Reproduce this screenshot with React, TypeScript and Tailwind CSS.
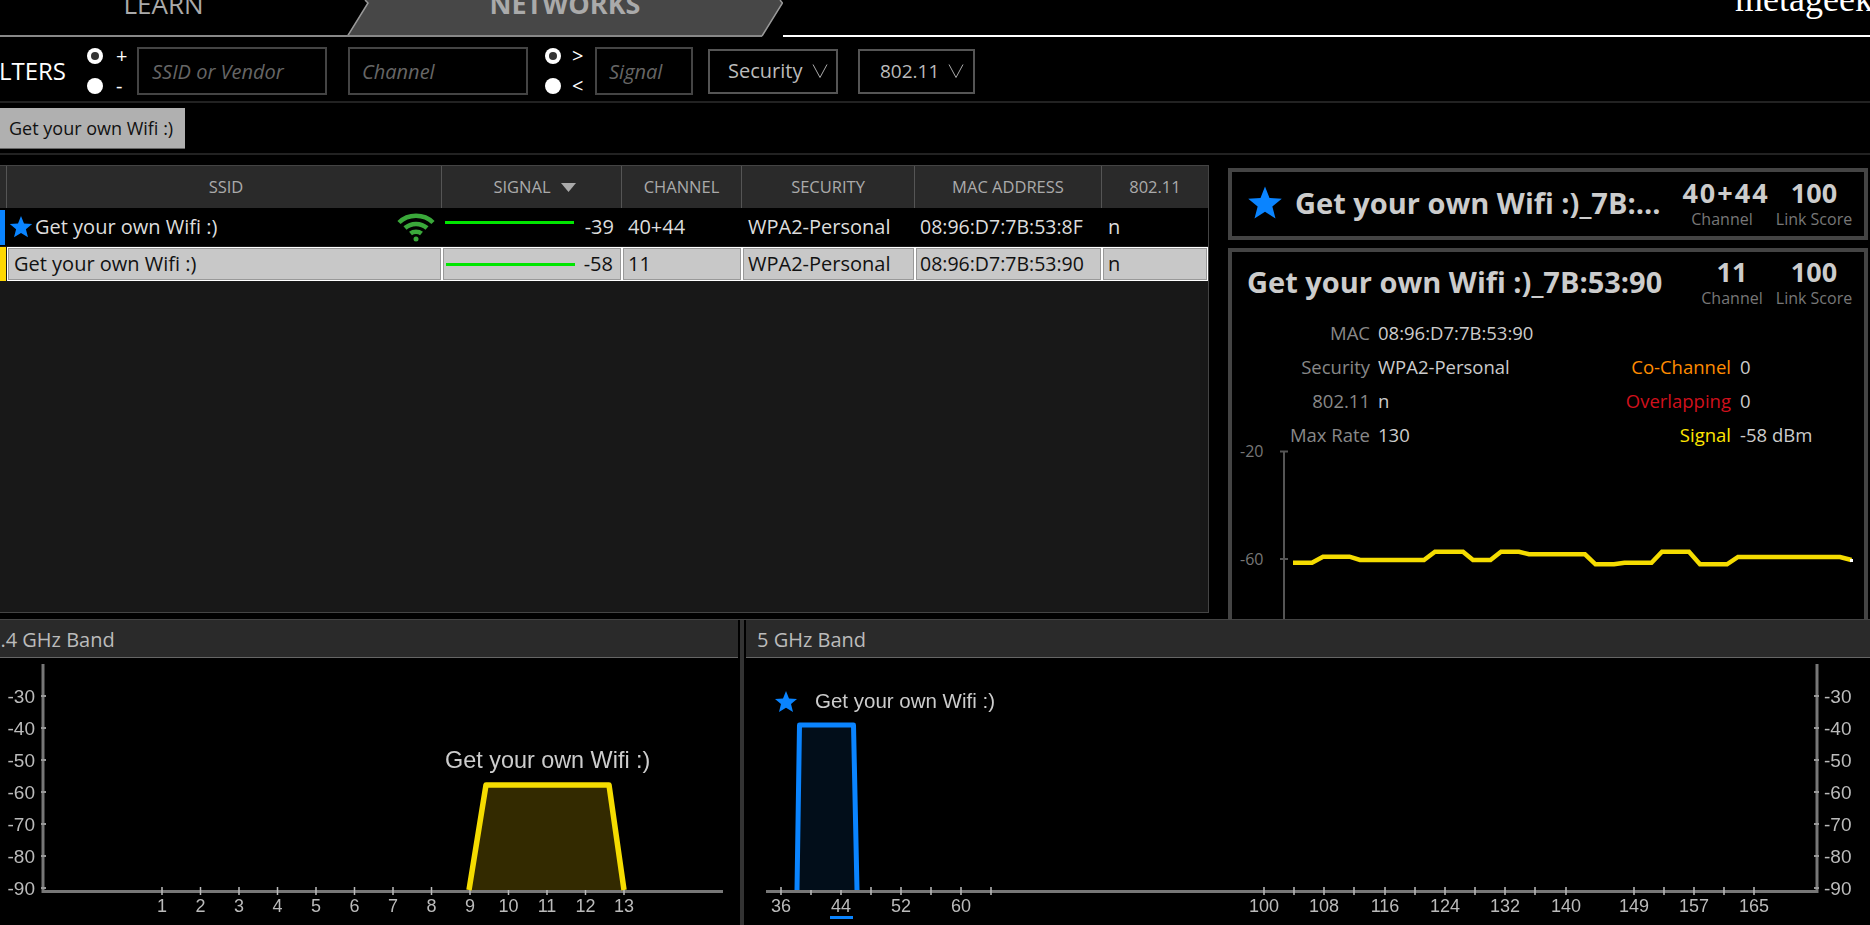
import React from 'react';

const FONT = "font-['Open_Sans','Noto_Sans',sans-serif]";

const Star = ({ size, className }: { size: number; className?: string }) => (
  <svg width={size} height={size} viewBox="0 0 24 24" className={className}>
    <path d="M12 1l3 7.6 8.2.5-6.3 5.2 2.1 8L12 17.9l-7 4.4 2.1-8L.8 9.1 9 8.6z" fill="#0a84ff" />
  </svg>
);

const WifiIcon = () => (
  <svg width="38" height="30" viewBox="0 0 38 30" className="shrink-0" fill="none" stroke="#3aa83a" strokeWidth="4.500">
    <path d="M2 10.5C11 1.5 27 1.5 36 10.5" />
    <path d="M8 16c6-5.500 16-5.500 22 0" />
    <path d="M13.500 21.500c3-2.500 8-2.500 11 0" />
    <circle cx="19" cy="27" r="2.500" fill="#3aa83a" stroke="none" />
  </svg>
);

const Radio = ({ checked }: { checked?: boolean }) => (
  <div className="w-4 h-4 rounded-full bg-white flex items-center justify-center">
    {checked && <div className="w-2 h-2 rounded-full bg-[#333]" />}
  </div>
);

const Chevron = () => (
  <svg width="16" height="16" viewBox="0 0 16 16" fill="none" stroke="#aaa" strokeWidth="1">
    <path d="M1 1.500L8 14.500L15 1.500" />
  </svg>
);

const HEAD_CELL = 'flex items-center justify-center border-r border-[#555] text-[16.500px] text-[#aaa]';
const COLS = 'grid grid-cols-[7px_435px_180px_120px_173px_187px_106px]';

const TableHeader = () => (
  <div className={`${COLS} h-[43px] bg-[#2a2a2a] border-t border-[#444]`}>
    <div className={HEAD_CELL} />
    <div className={`${HEAD_CELL} pl-[4px]`}>SSID</div>
    <div className={`${HEAD_CELL} gap-[10px] pl-[6px]`}>
      SIGNAL
      <svg width="15" height="9" viewBox="0 0 15 9"><path d="M0 0h15L7.500 9z" fill="#aaa" /></svg>
    </div>
    <div className={HEAD_CELL}>CHANNEL</div>
    <div className={HEAD_CELL}>SECURITY</div>
    <div className={HEAD_CELL}>MAC ADDRESS</div>
    <div className="flex items-center justify-center text-[16.500px] text-[#aaa]">802.11</div>
  </div>
);

const NetworkRow = () => (
  <div className={`${COLS} h-[38px] bg-black text-[#ddd] text-[20px] items-center`}>
    <div className="h-[35px] w-[5px] bg-[#0a84ff]" />
    <div className="flex items-center pl-[2px] pr-[7px] h-full">
      <Star size={24} />
      <span className="ml-[2px] flex-1">Get your own Wifi :)</span>
      <WifiIcon />
    </div>
    <div className="flex items-center pl-[3px] pr-[8px] justify-between h-full">
      <div className="w-[129px] h-[3px] bg-[#00e600] -mt-[10px]" />
      <span>-39</span>
    </div>
    <div className="pl-[6px]">40+44</div>
    <div className="pl-[6px]">WPA2-Personal</div>
    <div className="pl-[5px] text-[19.500px]">08:96:D7:7B:53:8F</div>
    <div className="pl-[6px]">n</div>
  </div>
);

const SEL = 'h-full bg-[#c8c8c8] border border-white shadow-[inset_0_0_0_1px_#999] flex items-center';

const SelectedRow = () => (
  <div className={`${COLS} h-[34px] mt-[1px] text-[#111] text-[20px]`}>
    <div className="h-full w-[6px] bg-[#ffd800]" />
    <div className={`${SEL} pl-[6px]`}>Get your own Wifi :)</div>
    <div className={`${SEL} pl-[3px] pr-[8px] justify-between`}>
      <div className="w-[129px] h-[3px] bg-[#00e600]" />
      <span>-58</span>
    </div>
    <div className={`${SEL} pl-[5px]`}>11</div>
    <div className={`${SEL} pl-[5px]`}>WPA2-Personal</div>
    <div className={`${SEL} pl-[4px] text-[19.500px]`}>08:96:D7:7B:53:90</div>
    <div className={`${SEL} pl-[5px]`}>n</div>
  </div>
);

const Stat = ({ value, label, w, wide }: { value: string; label: string; w: string; wide?: boolean }) => (
  <div className={`flex flex-col items-center ${w}`}>
    <span className={`text-[27px] leading-[30px] font-bold text-[#ccc] ${wide ? 'tracking-[2px] pl-[8px]' : ''}`}>{value}</span>
    <span className="text-[16px] leading-[22px] text-[#777]">{label}</span>
  </div>
);

const Detail = ({ label, value }: { label: string; value: string }) => (
  <div className="flex h-[34px] items-center text-[18.500px]">
    <span className="w-[138px] text-right text-[#888]">{label}</span>
    <span className="ml-[8px] text-[#ccc]">{value}</span>
  </div>
);

const Extra = ({ label, value, color }: { label: string; value: string; color: string }) => (
  <div className="flex h-[34px] items-center text-[18.500px]">
    <span className={`w-[139px] text-right ${color}`}>{label}</span>
    <span className="ml-[9px] text-[#ccc]">{value}</span>
  </div>
);

const SIGNAL_POINTS =
  '1293,562.700 1312,562.700 1323,556.700 1349.500,556.700 1360,560 1424,560 1435,551.700 1463,551.700 1473,560 1490.500,560 1501,551.700 1519,551.700 1529,554.300 1585,554.300 1595.500,564.300 1614,564.300 1624.500,562.700 1651.500,562.700 1662,551.700 1689,551.700 1700,564.300 1727,564.300 1738,557 1840,557 1851.500,560';

const SignalChart = () => (
  <svg width="632" height="180" viewBox="1232 440 632 180" className="-mt-[12px] shrink-0" fontFamily="'Open Sans',sans-serif">
    <text x="1240" y="457" fontSize="16" fill="#777">-20</text>
    <text x="1240" y="565" fontSize="16" fill="#777">-60</text>
    <path d="M1284 451V620M1280 451.500h8M1280 559h8" stroke="#555" strokeWidth="2" fill="none" />
    <polyline points={SIGNAL_POINTS} fill="none" stroke="#f5dc00" strokeWidth="4.500" />
    <rect x="1850" y="559" width="3" height="3" fill="#fff" />
  </svg>
);

const DBM = [-30, -40, -50, -60, -70, -80, -90];
const CHANNELS_24 = Array.from({ length: 13 }, (_, i) => i + 1);
const TICKS_5 = [781, 811, 841, 871, 901, 931, 961, 991, 1264, 1294, 1324, 1354, 1385, 1415, 1445, 1475, 1505, 1535, 1566, 1634, 1664, 1694, 1724, 1754];
const LABELS_5: [string, number][] = [['36', 781], ['44', 841], ['52', 901], ['60', 961], ['100', 1264], ['108', 1324], ['116', 1385], ['124', 1445], ['132', 1505], ['140', 1566], ['149', 1634], ['157', 1694], ['165', 1754]];

const Band24Chart = () => (
  <svg width="738" height="267" viewBox="0 658 738 267" className="blur-[0.4px]" fontFamily="'Liberation Sans',sans-serif">
    <path d="M43 664V891.500H723" stroke="#777" strokeWidth="3" fill="none" />
    {DBM.map((d, i) => (
      <g key={d}>
        <path d={`M41 ${696 + i * 32}h5`} stroke="#999" strokeWidth="2" />
        <text x="35" y={703 + i * 32} textAnchor="end" fontSize="19" fill="#bbb">{d}</text>
      </g>
    ))}
    {CHANNELS_24.map((c) => {
      const x = 162 + (c - 1) * 38.500;
      return (
        <g key={c}>
          <path d={`M${x} 887v8`} stroke="#bbb" strokeWidth="1.500" />
          <text x={x} y="912" textAnchor="middle" fontSize="18" fill="#bbb">{c}</text>
        </g>
      );
    })}
    <polygon points="469,890 486,785 609,785 624,890" fill="#332a00" />
    <polyline points="469,890 486,785 609,785 624,890" fill="none" stroke="#f5dc00" strokeWidth="5.500" strokeLinejoin="round" />
    <text x="445" y="768" fontSize="23.400" fill="#ccc">Get your own Wifi :)</text>
  </svg>
);

const Band5Chart = () => (
  <svg width="1124" height="267" viewBox="746 658 1124 267" className="blur-[0.4px]" fontFamily="'Liberation Sans',sans-serif">
    <path d="M766 891.500H1817V664" stroke="#777" strokeWidth="3" fill="none" />
    {TICKS_5.map((x) => <path key={x} d={`M${x} 887v8`} stroke="#bbb" strokeWidth="1.500" />)}
    {LABELS_5.map(([t, x]) => (
      <text key={t} x={x} y="912" textAnchor="middle" fontSize="18" fill="#bbb">{t}</text>
    ))}
    {DBM.map((d, i) => (
      <g key={d}>
        <path d={`M1814 ${696 + i * 32}h5`} stroke="#999" strokeWidth="2" />
        <text x="1824" y={703 + i * 32} fontSize="19" fill="#bbb">{d}</text>
      </g>
    ))}
    <polygon points="797,890 799.500,725 853.500,725 857,890" fill="#020e1a" />
    <polyline points="797,890 799.500,725 853.500,725 857,890" fill="none" stroke="#0a84ff" strokeWidth="5" strokeLinejoin="round" />
    <path d="M786 691l3 7.500 8 .5-6 5 2 8-7-4.300-7 4.300 2-8-6-5 8-.5z" fill="#0a84ff" />
    <text x="815" y="708" fontSize="20.500" fill="#ccc">Get your own Wifi :)</text>
    <rect x="830" y="916" width="23" height="3" fill="#0a84ff" />
  </svg>
);

export default function App() {
  return (
    <div className={`w-[1870px] h-[925px] overflow-hidden bg-black flex flex-col ${FONT}`}>
      {/* tabs */}
      <div className="h-[37px] flex shrink-0 relative">
        <div className="w-[347px] border-b-2 border-[#888] flex justify-center pr-[20px] overflow-hidden">
          <span className="text-[26px] leading-[32px] text-[#aaa] relative top-[-12px] h-[32px]">LEARN</span>
        </div>
        <div className="w-[436px] h-[37px] relative overflow-hidden">
          <svg width="436" height="37" viewBox="0 0 436 37" className="absolute inset-0">
            <polygon points="0,36 21,3 18,0 433,0 436,3 415,36" fill="#474747" />
            <path d="M0.500 36L21 3L18 0M415 36L435.500 3L433 0" fill="none" stroke="#999" strokeWidth="1.500" />
            <path d="M0 36H415" stroke="#888" strokeWidth="2" />
          </svg>
          <div className="absolute inset-x-0 top-[-12px] text-center text-[27px] leading-[32px] font-bold text-[#aaa]">NETWORKS</div>
        </div>
        <div className="flex-1 border-b-2 border-white flex justify-end overflow-hidden">
          <span className="font-['Liberation_Serif',serif] text-[36px] leading-[40px] text-white relative top-[-21px] h-[40px] -mr-[3px]">metageek</span>
        </div>
      </div>

      {/* filters */}
      <div className="h-[66px] shrink-0 border-b-2 border-[#222] pt-[4px] flex items-center text-[#ccc]">
        <div className="w-[66px] flex justify-end overflow-hidden whitespace-nowrap text-[24px] text-white">FILTERS</div>
        <div className="ml-[21px] flex flex-col gap-[14px]">
          <Radio checked />
          <Radio />
        </div>
        <div className="ml-[13px] w-[21px] flex flex-col text-[20px] leading-[30px] text-white">
          <span>+</span>
          <span>-</span>
        </div>
        <input placeholder="SSID or Vendor" className="w-[190px] h-[48px] border-2 border-[#444] bg-black px-[13px] text-[20px] italic placeholder:text-[#666]" />
        <input placeholder="Channel" className="ml-[21px] w-[180px] h-[48px] border-2 border-[#444] bg-black px-[12px] text-[20px] italic placeholder:text-[#666]" />
        <div className="ml-[17px] flex flex-col gap-[14px]">
          <Radio checked />
          <Radio />
        </div>
        <div className="ml-[11px] w-[23px] flex flex-col text-[20px] leading-[30px] text-white">
          <span>&gt;</span>
          <span>&lt;</span>
        </div>
        <input placeholder="Signal" className="w-[98px] h-[48px] border-2 border-[#444] bg-black px-[12px] text-[20px] italic placeholder:text-[#666]" />
        <div className="ml-[15px] w-[130px] h-[45px] border-2 border-[#555] flex items-center pl-[18px] gap-[10px] text-[20px] text-[#bbb]">
          Security <Chevron />
        </div>
        <div className="ml-[20px] w-[117px] h-[45px] border-2 border-[#555] flex items-center pl-[20px] gap-[9px] text-[19px] text-[#bbb]">
          802.11 <Chevron />
        </div>
      </div>

      {/* ssid chips */}
      <div className="h-[52px] shrink-0 border-b-2 border-[#222] flex items-center">
        <div className="w-[185px] h-[41px] bg-[#b0b0b0] border-b border-[#666] flex items-center pl-[9px] pt-[1px] text-[18px] text-[#111]">
          Get your own Wifi :)
        </div>
      </div>

      {/* table and details */}
      <div className="h-[464px] shrink-0 flex overflow-hidden">
        <div className="w-[1209px] h-[448px] mt-[10px] bg-[#181818] border-r border-b border-[#444]">
          <TableHeader />
          <NetworkRow />
          <SelectedRow />
        </div>
        <div className="ml-[19px] w-[640px] flex flex-col mt-[13px]">
          <div className="h-[72px] shrink-0 border-4 border-[#444] flex items-center pl-[15px] pr-[8px] pb-[2px]">
            <Star size={36} />
            <span className="ml-[12px] flex-1 text-[29px] font-bold text-[#ccc] whitespace-nowrap">Get your own Wifi :)_7B:...</span>
            <div className="flex mt-[2px]">
              <Stat value="40+44" label="Channel" w="w-[100px]" wide />
              <Stat value="100" label="Link Score" w="w-[84px]" />
            </div>
          </div>
          <div className="mt-[8px] flex-1 border-x-4 border-t-4 border-[#444] flex flex-col">
            <div className="flex pl-[15px] pr-[8px] pt-[8px] h-[64px] shrink-0">
              <span className="flex-1 text-[29px] leading-[44px] font-bold text-[#ccc] whitespace-nowrap">Get your own Wifi :)_7B:53:90</span>
              <div className="flex -mt-[3px]">
                <Stat value="11" label="Channel" w="w-[80px]" />
                <Stat value="100" label="Link Score" w="w-[84px]" />
              </div>
            </div>
            <div className="flex shrink-0">
              <div className="w-[360px] flex flex-col">
                <Detail label="MAC" value="08:96:D7:7B:53:90" />
                <Detail label="Security" value="WPA2-Personal" />
                <Detail label="802.11" value="n" />
                <Detail label="Max Rate" value="130" />
              </div>
              <div className="flex flex-col pt-[34px]">
                <Extra label="Co-Channel" value="0" color="text-[#ff8c00]" />
                <Extra label="Overlapping" value="0" color="text-[#d0101c]" />
                <Extra label="Signal" value="-58 dBm" color="text-[#ffe600]" />
              </div>
            </div>
            <SignalChart />
          </div>
        </div>
      </div>

      {/* bands */}
      <div className="flex-1 flex border-t border-[#444]">
        <div className="w-[738px] flex flex-col shrink-0">
          <div className="h-[38px] bg-[#2a2a2a] border-b border-[#666] flex items-center pt-[3px] text-[20px] text-[#bbb] shrink-0">
            <span className="-ml-[11px]">2.4 GHz Band</span>
          </div>
          <Band24Chart />
        </div>
        <div className="w-[8px] shrink-0 pl-[2px]">
          <div className="w-[4px] h-full bg-[#333]" />
        </div>
        <div className="flex-1 flex flex-col">
          <div className="h-[38px] bg-[#2a2a2a] border-b border-[#666] flex items-center pl-[11px] pt-[3px] text-[20px] text-[#bbb] shrink-0">
            5 GHz Band
          </div>
          <Band5Chart />
        </div>
      </div>
    </div>
  );
}
